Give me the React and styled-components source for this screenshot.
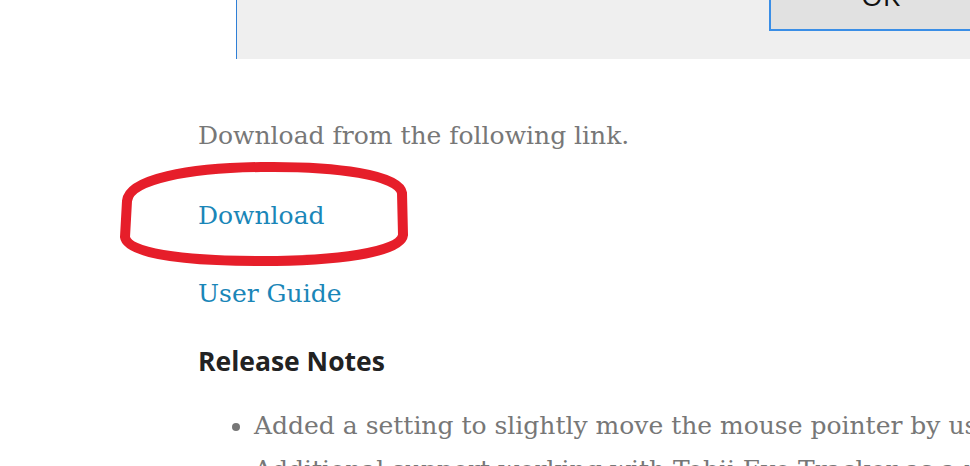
import React from 'react'
import styled, { createGlobalStyle } from 'styled-components'

const Global = createGlobalStyle`
  html, body {
    margin: 0;
    padding: 0;
    background: #fff;
    overflow: hidden;
  }
`

const Page = styled.div`
  width: 970px;
  height: 466px;
  overflow: hidden;
  position: relative;
`

const DialogShot = styled.div`
  margin-left: 236px;
  height: 59px;
  background: #efefef;
  border-left: 1px solid #2f7fd6;
  display: flex;
  justify-content: flex-end;
  align-items: flex-end;
`

const OkButton = styled.div`
  width: 201px;
  height: 40px;
  margin-bottom: 28px;
  box-sizing: border-box;
  border: 2px solid #3a8ee6;
  border-right: none;
  background: #e1e1e1;
  font-family: 'Open Sans', sans-serif;
  font-size: 28px;
  line-height: 28px;
  color: #111;
  padding-left: 90px;
  display: flex;
  align-items: flex-end;
  padding-bottom: 20px;
`

const Content = styled.div`
  padding-left: 198px;
  padding-top: 52px;
  font-family: 'DejaVu Serif', Georgia, serif;
  font-size: 25px;
  color: #777;
`

const Para = styled.p`
  margin: 0 0 ${p => p.gap || 0}px;
  line-height: 50px;
  white-space: nowrap;
`

const Link = styled.a`
  color: #1a86b8;
  text-decoration: none;
`

const LinkWrap = styled.span`
  position: relative;
  display: inline-block;
`

const Ring = styled.svg`
  position: absolute;
  left: -79px;
  top: -30px;
  pointer-events: none;
`

const Heading = styled.h3`
  margin: 0;
  font-family: 'Open Sans', sans-serif;
  font-weight: 700;
  font-size: 26.5px;
  line-height: 40px;
  color: #222;
`

const List = styled.ul`
  margin: 23px 0 0;
  padding-left: 56px;
  line-height: 44px;
  white-space: nowrap;
  li::marker {
    color: #777;
  }
`

export default function App() {
  return (
    <Page>
      <Global />
      <DialogShot>
        <OkButton>OK</OkButton>
      </DialogShot>
      <Content>
        <Para gap={30}>Download from the following link.</Para>
        <Para gap={28}>
          <LinkWrap>
            <Link href="#">Download</Link>
            <Ring width="292" height="106" viewBox="0 0 292 106">
              <path
                d="M8 40 C 10 18, 70 7, 142 6 C 218 5, 280 14, 283 32 L 284 74 C 282 92, 215 100, 142 100 C 60 100, 8 92, 6 76 Z"
                fill="none"
                stroke="#e61e2a"
                strokeWidth="10"
              />
            </Ring>
          </LinkWrap>
        </Para>
        <Para gap={22}>
          <Link href="#">User Guide</Link>
        </Para>
        <Heading>Release Notes</Heading>
        <List>
          <li>Added a setting to slightly move the mouse pointer by using the keyboard.</li>
          <li>Additional support working with Tobii Eye Tracker as a mouse device.</li>
        </List>
      </Content>
    </Page>
  )
}
